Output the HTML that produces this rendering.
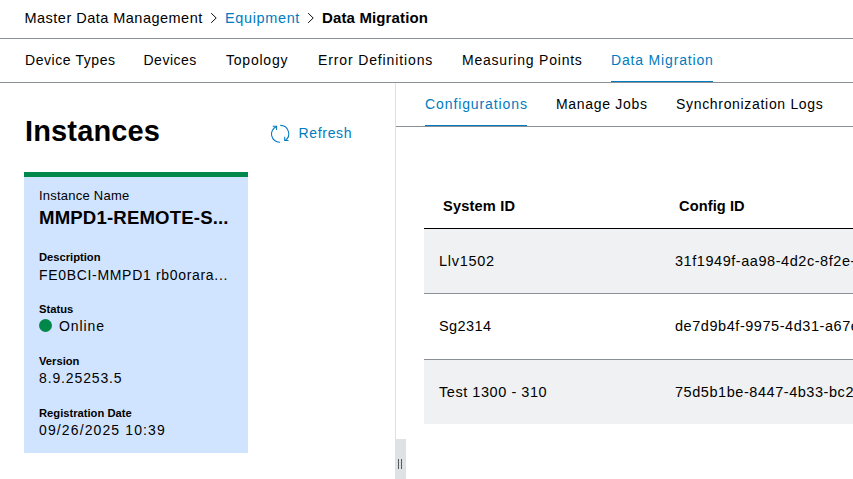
<!DOCTYPE html>
<html>
<head>
<meta charset="utf-8">
<style>
html,body{margin:0;padding:0;}
body{width:853px;height:479px;overflow:hidden;position:relative;background:#fff;font-family:"Liberation Sans",sans-serif;color:#000;}
.t{position:absolute;white-space:nowrap;line-height:20px;}
.r{position:absolute;}
.blue{color:#007bc0;}
.b{font-weight:bold;}
</style>
</head>
<body>
<!-- breadcrumb -->
<div class="t" style="left:24.5px;top:8px;font-size:14.5px;letter-spacing:0.48px;">Master Data Management</div>
<svg class="r" style="left:209px;top:11px" width="10" height="14" viewBox="0 0 10 14"><polyline points="2.2,2.2 7.2,7 2.2,11.8" fill="none" stroke="#000" stroke-width="0.95"/></svg>
<div class="t blue" style="left:225px;top:8px;font-size:14.5px;letter-spacing:0.63px;">Equipment</div>
<svg class="r" style="left:306px;top:11px" width="10" height="14" viewBox="0 0 10 14"><polyline points="2.2,2.2 7.2,7 2.2,11.8" fill="none" stroke="#000" stroke-width="0.95"/></svg>
<div class="t b" style="left:322px;top:8px;font-size:15px;letter-spacing:0.14px;">Data Migration</div>
<div class="r" style="left:0;top:38px;width:853px;height:1px;background:#8a9097"></div>

<!-- tabs -->
<div class="t" style="left:25px;top:50px;font-size:14px;letter-spacing:0.57px;">Device Types</div>
<div class="t" style="left:143.5px;top:50px;font-size:14px;letter-spacing:0.5px;">Devices</div>
<div class="t" style="left:226px;top:50px;font-size:14px;letter-spacing:0.78px;">Topology</div>
<div class="t" style="left:318px;top:50px;font-size:14px;letter-spacing:0.87px;">Error Definitions</div>
<div class="t" style="left:462px;top:50px;font-size:14px;letter-spacing:0.78px;">Measuring Points</div>
<div class="t blue" style="left:611px;top:50px;font-size:14px;letter-spacing:0.83px;">Data Migration</div>
<div class="r" style="left:0;top:82px;width:853px;height:1px;background:#8a9097"></div>
<div class="r" style="left:611px;top:81px;width:102px;height:1px;background:#007bc0"></div>

<!-- left panel -->
<div class="t b" style="left:25px;top:115.5px;font-size:29px;line-height:30px;letter-spacing:0.15px;">Instances</div>
<svg class="r" style="left:266px;top:120px" width="30" height="28" viewBox="0 0 30 28">
<g fill="none" stroke="#007bc0" stroke-width="1.05">
<path d="M14,22.2 A8.2,8.2 0 0 1 10.6,6.4"/>
<polyline points="6.7,6.2 10.6,6.2 10.6,10"/>
<path d="M14.3,5.4 A8.3,8.3 0 0 1 19.3,20.4"/>
<polyline points="18.7,16.8 18.7,20.5 22.5,20.5"/>
</g>
</svg>
<div class="t blue" style="left:298.5px;top:123px;font-size:14px;letter-spacing:0.67px;">Refresh</div>

<!-- card -->
<div class="r" style="left:24px;top:172px;width:224px;height:5px;background:#00884a"></div>
<div class="r" style="left:24px;top:177px;width:224px;height:276px;background:#d1e4ff"></div>
<div class="t" style="left:39px;top:186px;font-size:13px;letter-spacing:0.23px;">Instance Name</div>
<div class="t b" style="left:39px;top:206.5px;font-size:18.6px;line-height:22px;letter-spacing:0.16px;">MMPD1-REMOTE-S...</div>
<div class="t b" style="left:39px;top:250px;font-size:11.2px;line-height:14px;">Description</div>
<div class="t" style="left:39px;top:265px;font-size:14px;letter-spacing:0.68px;">FE0BCI-MMPD1 rb0orara...</div>
<div class="t b" style="left:39px;top:302px;font-size:11.2px;line-height:14px;">Status</div>
<div class="r" style="left:38.5px;top:318.5px;width:13.5px;height:13.5px;border-radius:50%;background:#00884a"></div>
<div class="t" style="left:59px;top:316px;font-size:14px;letter-spacing:0.9px;">Online</div>
<div class="t b" style="left:39px;top:353.5px;font-size:11.2px;line-height:14px;">Version</div>
<div class="t" style="left:39px;top:368px;font-size:14px;letter-spacing:0.87px;">8.9.25253.5</div>
<div class="t b" style="left:39px;top:405.5px;font-size:11.2px;line-height:14px;">Registration Date</div>
<div class="t" style="left:39px;top:420px;font-size:14px;letter-spacing:1.12px;">09/26/2025 10:39</div>

<!-- divider + splitter -->
<div class="r" style="left:395px;top:83px;width:1px;height:396px;background:#e0e0e0"></div>
<div class="r" style="left:395px;top:439px;width:11px;height:40px;background:#dfe2e4"></div>
<div class="r" style="left:398px;top:459px;width:1px;height:10px;background:#5a5a5a"></div>
<div class="r" style="left:401px;top:459px;width:1px;height:10px;background:#5a5a5a"></div>

<!-- sub tabs -->
<div class="t blue" style="left:425px;top:94px;font-size:14px;letter-spacing:0.9px;">Configurations</div>
<div class="t" style="left:556px;top:94px;font-size:14px;letter-spacing:0.69px;">Manage Jobs</div>
<div class="t" style="left:676px;top:94px;font-size:14px;letter-spacing:0.68px;">Synchronization Logs</div>
<div class="r" style="left:396px;top:126px;width:457px;height:1px;background:#8a9097"></div>
<div class="r" style="left:425px;top:125px;width:102px;height:1px;background:#007bc0"></div>

<!-- table -->
<div class="t b" style="left:443px;top:196px;font-size:14.6px;letter-spacing:0.18px;">System ID</div>
<div class="t b" style="left:679px;top:196px;font-size:14.6px;letter-spacing:0.1px;">Config ID</div>
<div class="r" style="left:424px;top:228px;width:429px;height:1px;background:#000"></div>
<div class="r" style="left:424px;top:229px;width:429px;height:64px;background:#eff1f2"></div>
<div class="r" style="left:424px;top:293px;width:429px;height:1px;background:#8a9097"></div>
<div class="r" style="left:424px;top:359px;width:429px;height:1px;background:#8a9097"></div>
<div class="r" style="left:424px;top:360px;width:429px;height:64px;background:#eff1f2"></div>
<div class="t" style="left:439px;top:251px;font-size:14.5px;letter-spacing:0.7px;">Llv1502</div>
<div class="t" style="left:675px;top:251px;font-size:14.5px;letter-spacing:0.55px;">31f1949f-aa98-4d2c-8f2e-bc</div>
<div class="t" style="left:439px;top:316px;font-size:14.5px;letter-spacing:0.4px;">Sg2314</div>
<div class="t" style="left:675px;top:316px;font-size:14.5px;letter-spacing:0.55px;">de7d9b4f-9975-4d31-a67e-9</div>
<div class="t" style="left:439px;top:381.5px;font-size:14.5px;letter-spacing:0.55px;">Test 1300 - 310</div>
<div class="t" style="left:675px;top:381.5px;font-size:14.5px;letter-spacing:0.55px;">75d5b1be-8447-4b33-bc2a-1</div>
</body>
</html>
